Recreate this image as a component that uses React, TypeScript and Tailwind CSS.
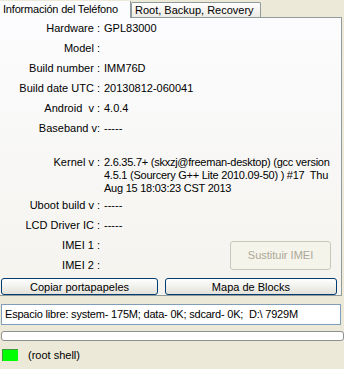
import React from 'react';

const rows1: [string, string][] = [
  ['Hardware :', 'GPL83000'],
  ['Model :', ''],
  ['Build number :', 'IMM76D'],
  ['Build date UTC :', '20130812-060041'],
  ['Android  v :', '4.0.4'],
  ['Baseband v:', '-----'],
];

const rows2: [string, string][] = [
  ['Uboot build v :', '-----'],
  ['LCD Driver IC :', '-----'],
];

const Row: React.FC<{ label: string; value: string }> = ({ label, value }) => (
  <div className="flex h-[20px] items-center">
    <div className="w-[100px] shrink-0 text-right whitespace-pre">{label}</div>
    <div className="pl-[4px]">{value}</div>
  </div>
);

const App: React.FC = () => {
  return (
    <div
      className="w-[344px] h-[369px] bg-[#ECE9D8] text-[11px] text-black overflow-hidden"
      style={{ fontFamily: '"Liberation Sans", Arial, sans-serif' }}
    >
      {/* tabs */}
      <div className="flex h-[17px] items-end">
        <div className="h-[17px] w-[131px] bg-[#FCFCFE] border-r border-[#919B9C] pl-[3px] pt-[1px] leading-[14px] relative z-10 -mb-px tracking-[-0.2px]">
          Información del Teléfono
        </div>
        <div className="h-[15px] w-[130px] bg-gradient-to-b from-[#FFFFFF] to-[#ECEBE5] border border-b-0 border-[#919B9C] rounded-t-[2px] pl-[3px] leading-[14px]">
          Root, Backup, Recovery
        </div>
      </div>

      {/* panel */}
      <div className="w-[342px] h-[279px] border-t border-r border-b border-[#919B9C] bg-gradient-to-b from-[#FCFCFE] to-[#F4F3EE] flex flex-col">
        <div>
          {rows1.map(([l, v]) => (
            <Row key={l} label={l} value={v} />
          ))}
        </div>
        <div className="flex mt-[18px] leading-[13px]">
          <div className="w-[100px] shrink-0 text-right">Kernel v :</div>
          <div className="pl-[4px] whitespace-nowrap tracking-[-0.25px]">
            2.6.35.7+ (skxzj@freeman-desktop) (gcc version
            <br />
            4.5.1 (Sourcery G++ Lite 2010.09-50) ) #17&nbsp; Thu
            <br />
            Aug 15 18:03:23 CST 2013
          </div>
        </div>
        {rows2.map(([l, v]) => (
          <Row key={l} label={l} value={v} />
        ))}
        <div className="flex items-center">
          <div>
            <Row label="IMEI 1 :" value="" />
            <Row label="IMEI 2 :" value="" />
          </div>
          <button
            disabled
            className="ml-[126px] w-[101px] h-[29px] rounded-[3px] border border-[#C9C7BA] bg-[#F5F4EA] text-[#ACA899]"
          >
            Sustituir IMEI
          </button>
        </div>
        <div className="flex gap-[7px] pl-[1px] mt-[3px]">
          <button className="w-[157px] h-[17px] rounded-[3px] border border-[#003C74] bg-gradient-to-b from-[#FFFFFF] to-[#E3E2DA] leading-[14px]">
            Copiar portapapeles
          </button>
          <button className="w-[172px] h-[17px] rounded-[3px] border border-[#003C74] bg-gradient-to-b from-[#FFFFFF] to-[#E3E2DA] leading-[14px]">
            Mapa de Blocks
          </button>
        </div>
      </div>

      {/* footer */}
      <div className="mt-[8px] ml-[1px] w-[340px] h-[21px] border border-[#7F9DB9] bg-white flex items-center pl-[3px] tracking-[-0.2px]">
        Espacio libre: system- 175M; data- 0K; sdcard- 0K;&nbsp; D:\ 7929M
      </div>
      <div className="mt-[6px] ml-[1px] w-[343px] h-[10px] rounded-[3px] border border-[#8E8F8F] bg-white" />
      <div className="flex items-center mt-[6px] ml-[2px] gap-[10px]">
        <div className="w-[16px] h-[12px] bg-[#00FF00] border-l border-t border-[#3B9B3B]" />
        <span>(root shell)</span>
      </div>
    </div>
  );
};

export default App;
